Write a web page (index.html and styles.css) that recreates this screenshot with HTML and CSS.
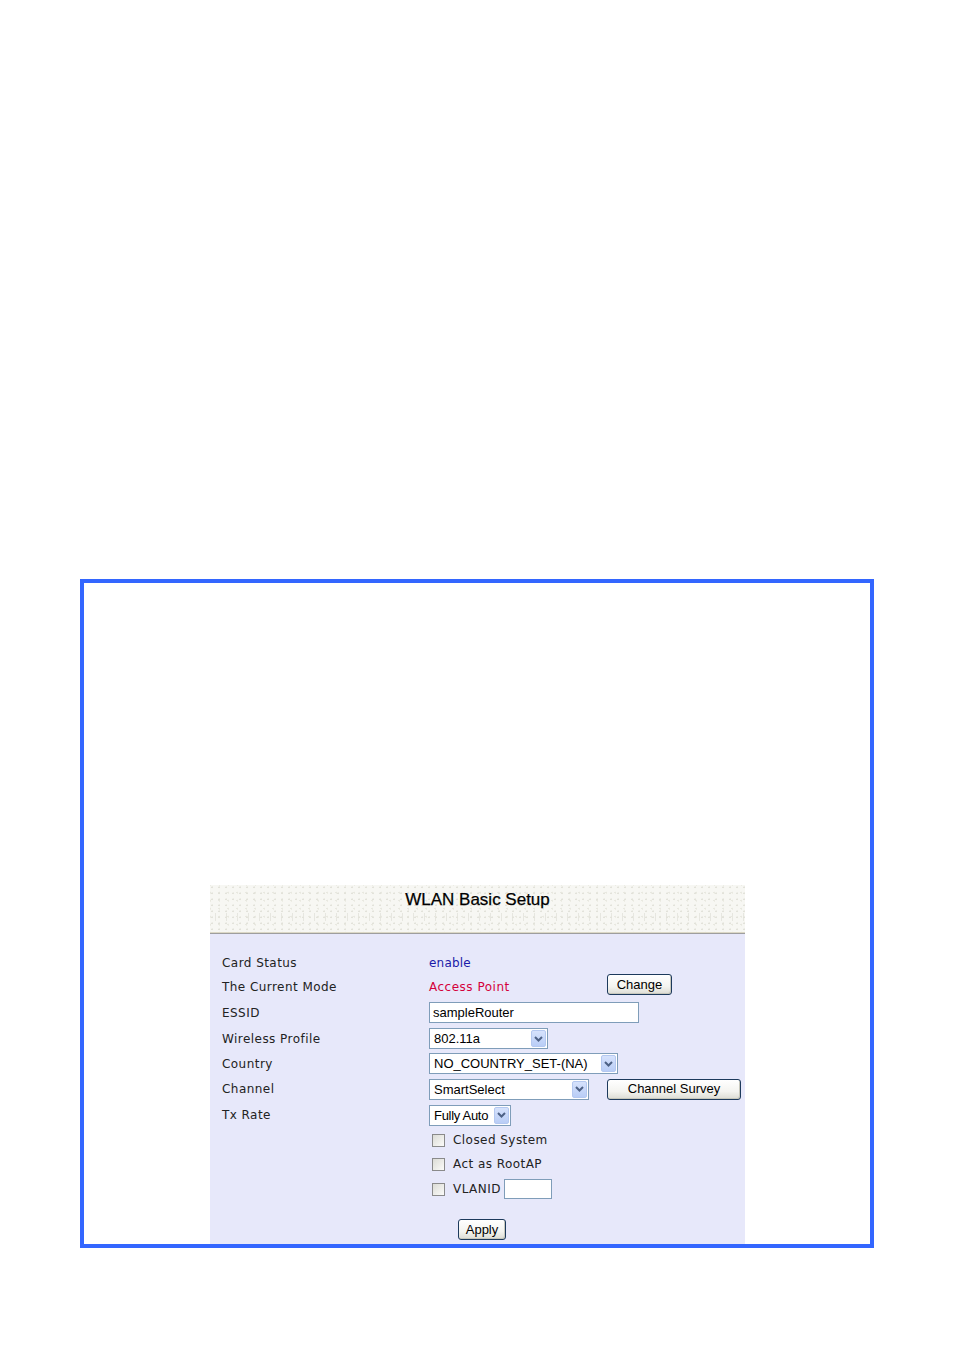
FILE: index.html
```html
<!DOCTYPE html>
<html>
<head>
<meta charset="utf-8">
<link rel="stylesheet" href="styles.css">
</head>
<body>
<div class="frame">
  <div class="panel">
    <div class="head"><span class="title">WLAN Basic Setup</span></div>
    <div class="body">
      <div class="row h23"><div class="lab">Card Status</div><div class="val"><span class="enable">enable</span></div></div>
      <div class="row h25"><div class="lab">The Current Mode</div><div class="val"><span class="mode">Access Point</span><span class="btn change">Change</span></div></div>
      <div class="row h27"><div class="lab">ESSID</div><div class="val"><span class="input essid">sampleRouter</span></div></div>
      <div class="row h25"><div class="lab">Wireless Profile</div><div class="val"><span class="select s-prof"><span class="st">802.11a</span><span class="arr"><svg width="9" height="6" viewBox="0 0 9 6"><path d="M1 1 L4.5 4.5 L8 1" fill="none" stroke="#4d6185" stroke-width="2"/></svg></span></span></div></div>
      <div class="row h25"><div class="lab">Country</div><div class="val"><span class="select s-country"><span class="st">NO_COUNTRY_SET-(NA)</span><span class="arr"><svg width="9" height="6" viewBox="0 0 9 6"><path d="M1 1 L4.5 4.5 L8 1" fill="none" stroke="#4d6185" stroke-width="2"/></svg></span></span></div></div>
      <div class="row h26"><div class="lab">Channel</div><div class="val"><span class="select s-chan"><span class="st">SmartSelect</span><span class="arr"><svg width="9" height="6" viewBox="0 0 9 6"><path d="M1 1 L4.5 4.5 L8 1" fill="none" stroke="#4d6185" stroke-width="2"/></svg></span></span><span class="btn survey">Channel Survey</span></div></div>
      <div class="row h26"><div class="lab">Tx Rate</div><div class="val"><span class="select s-rate"><span class="st">Fully Auto</span><span class="arr"><svg width="9" height="6" viewBox="0 0 9 6"><path d="M1 1 L4.5 4.5 L8 1" fill="none" stroke="#4d6185" stroke-width="2"/></svg></span></span></div></div>
      <div class="row h24"><div class="lab"></div><div class="val"><span class="cb"></span><span class="cbl">Closed System</span></div></div>
      <div class="row h24"><div class="lab"></div><div class="val"><span class="cb"></span><span class="cbl">Act as RootAP</span></div></div>
      <div class="row h26"><div class="lab"></div><div class="val"><span class="cb"></span><span class="cbl">VLANID</span><span class="input vlan"></span></div></div>
      <div class="applyrow"><span class="btn apply">Apply</span></div>
    </div>
  </div>
</div>
</body>
</html>
```

FILE: styles.css
```css
html, body {
  margin: 0;
  padding: 0;
  background: #ffffff;
}
.frame {
  margin: 579px 0 0 80px;
  width: 786px;
  height: 359px;
  border: 4px solid #3366ff;
  background: #ffffff;
  padding-top: 302px;
  box-sizing: content-box;
  overflow: hidden;
}
.panel {
  margin-left: 126px;
  width: 535px;
  height: 359px;
  background: #e7e8fa;
}
.head {
  height: 47px;
  display: flex;
  justify-content: center;
  align-items: flex-start;
  background-color: #f7f7f3;
  background-image:
    radial-gradient(circle at 30% 40%, #e2e2da 0.8px, transparent 1.2px),
    radial-gradient(circle at 70% 70%, #e8e8e0 0.8px, transparent 1.2px),
    repeating-linear-gradient(90deg, transparent 0 5px, rgba(205,205,195,0.4) 5px 6px, transparent 6px 11px);
  background-size: 7px 6px, 9px 8px, 100% 8px;
  background-position: 0 0, 3px 2px, 0 28px;
  background-repeat: repeat, repeat, repeat-x;
  border-bottom: 1px solid #dcd8c6;
  box-shadow: 0 1px 0 #9e9e9e;
}
.title {
  font-family: "Liberation Sans", Arial, sans-serif;
  font-size: 17px;
  color: #000;
  margin-top: 5px;
  -webkit-text-stroke: 0.25px #000;
}
.body {
  padding: 18px 0 0 12px;
  font-family: "DejaVu Sans", Verdana, sans-serif;
  font-size: 12px;
  color: #222;
}
.row {
  display: flex;
  align-items: center;
}
.h23 { height: 23px; }
.h24 { height: 24px; }
.h25 { height: 25px; }
.h26 { height: 26px; }
.h27 { height: 27px; }
.lab {
  width: 207px;
  flex: none;
  letter-spacing: 0.45px;
}
.val {
  display: flex;
  align-items: center;
  align-self: stretch;
}
.enable { color: #1a1aa8; letter-spacing: 0.2px; }
.mode { color: #d4003a; width: 178px; letter-spacing: 0.5px; }
.btn {
  font-family: "Liberation Sans", Arial, sans-serif;
  font-size: 13px;
  color: #000;
  display: inline-flex;
  align-items: center;
  justify-content: center;
  box-sizing: border-box;
  height: 21px;
  padding-bottom: 1px;
  border: 1px solid #1d3a5c;
  border-radius: 3px;
  background: linear-gradient(#ffffff, #f4f4f0 60%, #dcdcd4);
  box-shadow: inset -1px -1px 0 #c8c8bc;
}
.change { width: 65px; align-self: flex-start; margin-top: 0; }
.survey { width: 134px; margin-left: 18px; }
.apply { width: 48px; height: 21px; }
.input {
  display: inline-flex;
  align-items: center;
  box-sizing: border-box;
  height: 21px;
  background: #fff;
  border: 1px solid #7f9db9;
  font-family: "Liberation Sans", Arial, sans-serif;
  font-size: 13px;
  color: #000;
  padding-left: 3px;
}
.essid { width: 210px; }
.vlan { width: 48px; height: 20px; margin-left: 3px; }
.select {
  display: inline-flex;
  align-items: center;
  justify-content: space-between;
  box-sizing: border-box;
  height: 21px;
  background: #fff;
  border: 1px solid #7f9db9;
  font-family: "Liberation Sans", Arial, sans-serif;
  font-size: 13px;
  color: #000;
  padding: 0 1px 0 4px;
}
.arr {
  width: 15px;
  height: 17px;
  box-sizing: border-box;
  background: linear-gradient(#d6e2fc, #b9cdf6);
  border: 1px solid #b4c8f0;
  border-radius: 2px;
  display: flex;
  align-items: center;
  justify-content: center;
}
.s-prof { width: 119px; }
.s-country { width: 189px; }
.s-chan { width: 160px; }
.s-rate { width: 82px; }
.s-rate .st { letter-spacing: -0.3px; }
.cb {
  width: 13px;
  height: 13px;
  box-sizing: border-box;
  border: 1px solid #8a8a8a;
  background: linear-gradient(135deg, #dcdcd6, #fbfbf9);
  margin-left: 3px;
  margin-right: 8px;
}
.cbl { color: #222; letter-spacing: 0.45px; }
.applyrow {
  display: flex;
  padding-left: 236px;
  margin-top: 17px;
}
```
